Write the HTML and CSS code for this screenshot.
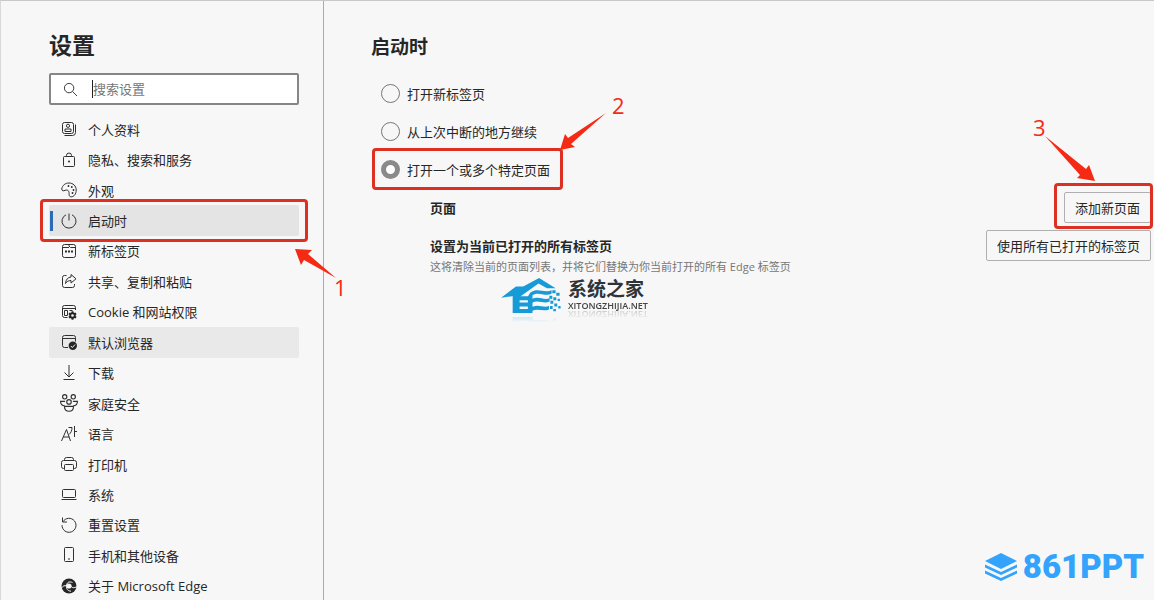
FILE: index.html
```
<!DOCTYPE html>
<html lang="zh-CN">
<head>
    <meta charset="UTF-8">
    <meta name="viewport" content="width=device-width, initial-scale=1.0">
    <title>设置</title>
    <link rel="stylesheet" href="styles.css">
</head>
<body>
    <div class="page">
        <!-- Sidebar -->
        <aside class="sidebar">
            <h1>设置</h1>
            <label class="search">
                <svg class="icon" viewBox="0 0 16 16"><circle cx="6.5" cy="6.5" r="5"/><path d="M10.2 10.2L15 15"/></svg>
                <input type="text" placeholder="搜索设置" aria-label="搜索设置">
            </label>
            <nav class="menu">
                <a href="#">
                    <svg class="icon" viewBox="0 0 16 16"><rect x="1.5" y="1.5" width="11" height="11" rx="2"/><path d="M14.5 3.5v8a3 3 0 0 1-3 3h-8"/><circle cx="7" cy="4.8" r="1.6"/><path d="M4 10.5V8h6v2.5z"/></svg>
                    个人资料
                </a>
                <a href="#">
                    <svg class="icon" viewBox="0 0 16 16"><rect x="2.5" y="4.5" width="11" height="10" rx="1"/><path d="M5.5 4.500V3.500a2.500 2.500 0 0 1 5 0v1"/><circle class="fill" cx="8" cy="9.5" r="1"/></svg>
                    隐私、搜索和服务
                </a>
                <a href="#">
                    <svg class="icon" viewBox="0 0 16 16"><path d="M.8 7C1.2 3.400 4.300 1 8 1c4 0 7.200 2.900 7.200 7 0 4-2.200 6.800-5 6.800-3 0-1.700-3.300-2.300-5C7.200 8 5.500 7.600 4.100 8.300 2.400 9.200.8 9 .8 7z"/><g class="fill"><circle cx="7.500" cy="4" r=".9"/><circle cx="10.800" cy="5" r=".9"/><circle cx="12.500" cy="8" r=".9"/><circle cx="11.500" cy="11" r=".9"/></g></svg>
                    外观
                </a>
                <a href="#" class="active" aria-current="page">
                    <svg class="icon" viewBox="0 0 16 16"><path d="M8 .5v7M5 1.800a7 7 0 1 0 6 0"/></svg>
                    启动时
                    <span class="mark mark-menu"></span>
                    <svg class="arrow arrow-one" viewBox="294 248 56 58"><path d="M295 250l17 1-4 4 28 24-32-18-3 5z"/><text x="334" y="297">1</text></svg>
                </a>
                <a href="#">
                    <svg class="icon" viewBox="0 0 16 16"><rect x="1.5" y="1.5" width="13" height="13" rx="2"/><path d="M1.5 4.500H8M8 1.500v1.500l1.500 1.500h5"/><path class="dots" d="M4 8.500h2M7 8.500h2M10 8.500h2"/></svg>
                    新标签页
                </a>
                <a href="#">
                    <svg class="icon" viewBox="0 0 16 16"><path d="M5.500 2.500h-2a2 2 0 0 0-2 2v8a2 2 0 0 0 2 2h8a2 2 0 0 0 2-2V11"/><path d="M10 1.500L15 5.800l-5 4.200V7.500C7.500 7.500 5.800 8.500 4.500 10.500 4.800 6.500 6.800 4.300 10 4z"/></svg>
                    共享、复制和粘贴
                </a>
                <a href="#">
                    <svg class="icon" viewBox="0 0 16 16"><path d="M6.500 13.500h-3a2 2 0 0 1-2-2v-8a2 2 0 0 1 2-2h9a2 2 0 0 1 2 2V6M1.500 4.500h13M3.500 6.500h3v5h-3zM8.500 6.500h3"/><circle class="fill" cx="11.500" cy="11.500" r="3.200"/><path class="gear" d="M11.500 7.300v8.400M7.900 9.400l7.200 4.200M15.100 9.400l-7.200 4.200"/><circle class="hole" cx="11.500" cy="11.500" r="1.300"/></svg>
                    Cookie 和网站权限
                </a>
                <a href="#" class="hover">
                    <svg class="icon" viewBox="0 0 16 16"><path d="M7 13.500H3.500a2 2 0 0 1-2-2v-8a2 2 0 0 1 2-2h9a2 2 0 0 1 2 2v4M1.500 4.500h13"/><circle class="fill" cx="11.800" cy="11.800" r="4.200"/><path class="check" d="M9.800 12l1.500 1.500 2.800-3"/></svg>
                    默认浏览器
                </a>
                <a href="#">
                    <svg class="icon" viewBox="0 0 16 16"><path d="M8 0v12M3.500 7.500L8 12l4.500-4.500M2.500 14.500h11"/></svg>
                    下载
                </a>
                <a href="#">
                    <svg class="icon wide" viewBox="0 0 16 16"><circle cx="4.200" cy="2.500" r="1.900"/><circle cx="11.800" cy="2.500" r="1.900"/><circle cx="8" cy="7" r="2"/><path d="M4.200 10.500C2 10.500.5 9 .5 6.500h4M11.800 10.500c2.200 0 3.700-1.500 3.700-4h-4M4 11h8c0 2.500-1.600 4.300-4 4.300S4 13.500 4 11z"/></svg>
                    家庭安全
                </a>
                <a href="#">
                    <svg class="icon" viewBox="0 0 16 16"><path d="M.5 15L5.500 3.500l4 11.500M2.200 11h6M7.500 1.500H11c0 3-1 5.300-3 7M13.500 0v11M13.500 5.500H16"/></svg>
                    语言
                </a>
                <a href="#">
                    <svg class="icon" viewBox="0 0 16 16"><path d="M3.500 4.500v-1a2 2 0 0 1 2-2h5a2 2 0 0 1 2 2v1M3.500 12.500h-1a2 2 0 0 1-2-2v-4a2 2 0 0 1 2-2h11a2 2 0 0 1 2 2v4a2 2 0 0 1-2 2h-1"/><rect x="3.500" y="8.500" width="9" height="6" rx="1"/></svg>
                    打印机
                </a>
                <a href="#">
                    <svg class="icon" viewBox="0 0 16 16"><rect x="1.500" y="3.500" width="13" height="8" rx="1"/><path d="M.5 13.500h15"/></svg>
                    系统
                </a>
                <a href="#">
                    <svg class="icon" viewBox="0 0 16 16"><path d="M1.500 .5v4.500H6M2 4.700a7 7 0 1 1-1 3.500"/></svg>
                    重置设置
                </a>
                <a href="#">
                    <svg class="icon" viewBox="0 0 16 16"><rect x="3.500" y=".5" width="9" height="14" rx="1"/><path d="M7 12h2"/></svg>
                    手机和其他设备
                </a>
                <a href="#">
                    <svg class="icon" viewBox="0 0 16 16"><circle class="fill" cx="8" cy="8" r="7.500"/><circle class="hole" cx="8" cy="8" r="2.600"/><path class="swirl" d="M5.500 8C5.500 4.500 8 3 11.500 4.500M5.500 7.500C5 10.500 6.500 13 10 13.200M10.500 8c0 1.800 2.500 2.500 5.500.5M5.500 8C3.500 7 2 8 .5 10"/></svg>
                    关于 Microsoft Edge
                </a>
            </nav>
        </aside>

        <!-- Content -->
        <main class="content">
            <h2>启动时</h2>
            <form class="options">
                <div class="option">
                    <label><input type="radio" name="startup">打开新标签页</label>
                </div>
                <div class="option">
                    <label><input type="radio" name="startup">从上次中断的地方继续</label>
                </div>
                <div class="option">
                    <label>
                        <input type="radio" name="startup" checked>打开一个或多个特定页面
                        <span class="mark mark-option"></span>
                        <svg class="arrow arrow-two" viewBox="558 88 70 64"><path d="M560 150l5-16 3 4 38-25-35 31 4 3z"/><text x="612" y="114">2</text></svg>
                    </label>
                </div>
            </form>
            <div class="row">
                <h3>页面</h3>
                <div class="action">
                    <button type="button">添加新页面</button>
                    <span class="mark mark-button"></span>
                    <svg class="arrow arrow-three" viewBox="1030 110 70 72"><path d="M1095 181l-6-16-3 4-41-33 35 39-3 3z"/><text x="1033" y="136">3</text></svg>
                </div>
            </div>
            <div class="row">
                <div>
                    <h3>设置为当前已打开的所有标签页</h3>
                    <p>这将清除当前的页面列表，并将它们替换为你当前打开的所有 Edge 标签页</p>
                </div>
                <button type="button">使用所有已打开的标签页</button>
            </div>

            <!-- Site logo -->
            <div class="site-logo">
                <svg viewBox="30 65 185 115">
                    <path d="M32 128L77 94h22L147 68l50 31h-26l-26-14-60 43v-8z"/>
                    <path d="M67 123l22-13v13h28v12H88v7h29v12H88v8h29v12H67z"/>
                    <path d="M120 113c25-18 40 3 65-8v10c-22 12-36-8-58 5v11c20-10 34 6 52-2v10c-18 9-34-6-52 4v12c20-8 32 4 50-2v10c-18 8-34-4-50 4v7h-14v-50z"/>
                    <path d="M187 105h10v9h-10zM199 113h10v9h-10zM178 122h9v9h-9zM190 126h9v9h-9zM203 131h7v7h-7zM181 137h9v9h-9zM193 145h9v9h-9zM205 153h7v7h-7zM180 153h8v9h-8zM190 162h8v7h-8z"/>
                </svg>
                <div>
                    <strong>系统之家</strong>
                    <span>XITONGZHIJIA.NET</span>
                </div>
            </div>
        </main>

        <!-- Brand in the corner -->
        <div class="brand">
            <svg viewBox="0 0 32 28"><path d="M16 0l16 8-16 8L0 8z"/><path d="M0 11.500l16 7.500 16-7.500v3L16 22 0 14.500z"/><path d="M0 17.500L16 25l16-7.500v3L16 28 0 20.500z"/></svg>
            <span>861PPT</span>
        </div>
    </div>
</body>
</html>
```
FILE: styles.css
```
* {
    box-sizing: border-box;
}
body {
    margin: 0;
    background-color: #f7f7f7;
    color: #262626;
    font-family: "Open Sans", "Noto Sans CJK SC", sans-serif;
    font-size: 13px;
}
h1, h2, h3, p {
    margin: 0;
}
button, input {
    font: inherit;
    color: inherit;
}
.page {
    position: relative;
    display: flex;
    min-height: 100vh;
    border-top: 1px solid #c8c8c8;
    border-left: 1px solid #d8d8d8;
    overflow: hidden;
}

/* Sidebar */
.sidebar {
    position: relative;
    z-index: 1;
    display: flex;
    flex-direction: column;
    flex: none;
    width: 323px;
    padding: 28px 24px 0 48px;
    border-right: 1px solid #ababab;
}
h1 {
    margin-bottom: 12px;
    font-size: 23px;
    line-height: 32px;
}
.search {
    display: flex;
    align-items: center;
    gap: 14px;
    height: 32px;
    margin-bottom: 9px;
    padding: 0 12px;
    background: #fff;
    border: 2px solid #868686;
    border-radius: 2px;
}
.search input {
    flex: 1;
    min-width: 0;
    height: 18px;
    padding: 0;
    border: none;
    border-left: 1px solid #222;
    background: none;
    outline: none;
}
.search input::placeholder {
    color: #767676;
}
.icon {
    flex: none;
    width: 16px;
    height: 16px;
    fill: none;
    stroke: #303030;
}
.search .icon {
    width: 15px;
    height: 15px;
}
.icon.wide {
    width: 18px;
    height: 18px;
    margin: 0 -1px;
}
.icon .fill {
    fill: #262626;
    stroke: none;
}
.icon .gear {
    stroke: #262626;
    stroke-width: 2;
}
.icon .dots {
    stroke-width: 2;
}
.icon .hole {
    fill: #f7f7f7;
    stroke: none;
}
.icon .check, .icon .swirl {
    stroke: #f7f7f7;
}
.menu {
    display: flex;
    flex: 1;
    flex-direction: column;
    margin-bottom: -1px;
}
.menu a {
    position: relative;
    display: flex;
    flex: 1;
    align-items: center;
    gap: 11px;
    min-height: 30px;
    padding-left: 12px;
    border-radius: 2px;
    color: inherit;
    text-decoration: none;
}
.menu .active {
    background: #e4e4e4;
}
.menu .active::before {
    content: "";
    position: absolute;
    left: 1px;
    width: 3px;
    height: 20px;
    background: #2b6cb8;
}
.menu .hover {
    background: #e9e9e9;
}

/* Content */
.content {
    position: relative;
    flex: 1;
    padding: 31px 3px 0 47px;
}
h2 {
    margin-bottom: 12px;
    font-size: 19px;
    line-height: 30px;
}
.options {
    padding-bottom: 1px;
}
.option {
    display: flex;
    height: 38px;
    padding-left: 10px;
}
.option label {
    position: relative;
    display: flex;
    align-items: center;
    gap: 7px;
}
.option input {
    appearance: none;
    width: 19px;
    height: 19px;
    margin: 0;
    border: 1px solid #767676;
    border-radius: 50%;
}
.option input:checked {
    border: 5px solid #8a8a8a;
    background: #fff;
}
.row {
    display: flex;
    justify-content: space-between;
    align-items: flex-start;
    min-height: 38px;
    padding: 3px 0 0 59px;
}
h3 {
    padding-top: 3px;
    font-size: 13px;
    line-height: 26px;
}
.row p {
    color: #767676;
    font-size: 11px;
    line-height: 16px;
}
.row button {
    height: 31px;
    padding: 0 10px;
    background: #f7f7f7;
    border: 1px solid #b0b0b0;
    border-radius: 2px;
}
.action {
    position: relative;
}

/* Red marks and arrows */
.mark {
    position: absolute;
    border: 3px solid #dd3022;
    border-radius: 4px;
}
.mark-menu {
    inset: -6px -9px;
}
.mark-option {
    inset: -2px -13px -2px -9px;
}
.mark-button {
    inset: -9px -2px -6px -10px;
}
.arrow {
    position: absolute;
    overflow: visible;
    fill: #f52a14;
    font-size: 22px;
}
.arrow-one {
    left: 245px;
    top: 42px;
    width: 56px;
    height: 58px;
}
.arrow-two {
    right: -78px;
    top: -62px;
    width: 70px;
    height: 64px;
}
.arrow-three {
    right: 51px;
    top: -82px;
    width: 70px;
    height: 72px;
}

.site-logo {
    position: absolute;
    left: 176px;
    top: 276px;
    display: flex;
    gap: 6px;
}
.site-logo svg {
    width: 62px;
    height: 38px;
    fill: #169bd8;
    -webkit-box-reflect: below 0 linear-gradient(transparent 80%, rgba(255, 255, 255, 0.2));
}
.site-logo strong, .site-logo span {
    display: block;
}
.site-logo strong {
    color: #2e3338;
    font-size: 19px;
    line-height: 24px;
}
.site-logo span {
    color: #444;
    font-family: "Open Sans", sans-serif;
    font-size: 9px;
    font-weight: 600;
    line-height: 10px;
    -webkit-box-reflect: below -2px linear-gradient(transparent, rgba(0, 0, 0, 0.3));
}
.brand {
    position: absolute;
    right: 10px;
    bottom: 17px;
    display: flex;
    align-items: center;
    gap: 6px;
    color: #34a3fb;
    font-family: Roboto, sans-serif;
    font-size: 33px;
    font-weight: 900;
    line-height: 32px;
}
.brand svg {
    width: 32px;
    height: 28px;
    fill: currentColor;
}
```
